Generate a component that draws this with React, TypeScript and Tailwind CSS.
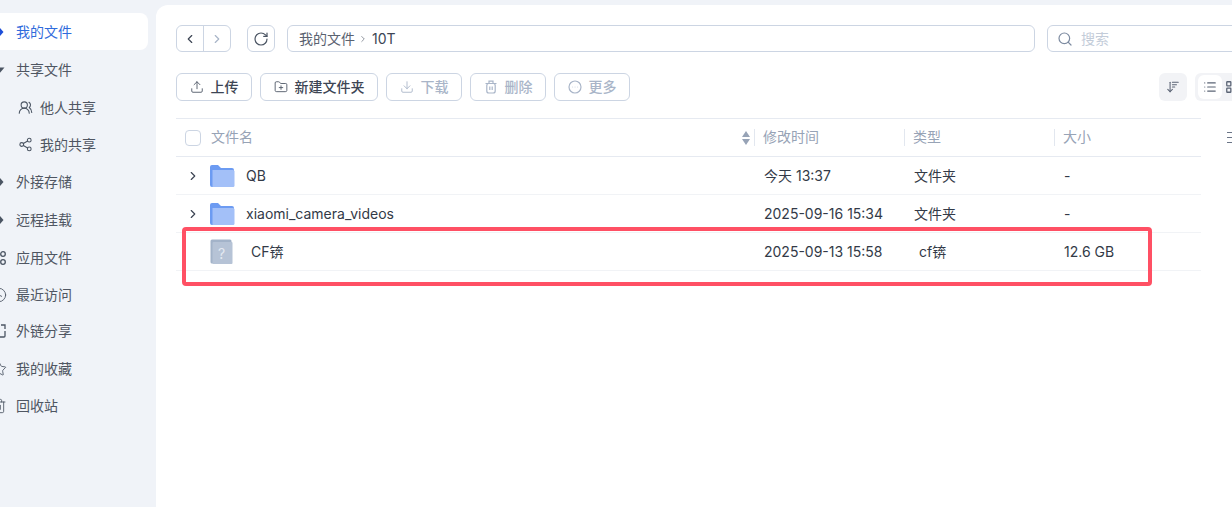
import { FC, ReactElement, ReactNode } from "react";
import {
  ArrowDownWideNarrow,
  ChevronLeft,
  ChevronRight,
  Clock,
  Download,
  FolderPlus,
  LayoutGrid,
  List,
  RotateCw,
  Search,
  Share2,
  Star,
  Trash2,
  Upload,
  UsersRound
} from "lucide-react";

const FONT = "font-['Inter','Noto_Sans_CJK_SC',sans-serif]";

const Diamond: FC<{ color: string }> = ({ color }): ReactElement => (
  <svg width="16" height="16" viewBox="0 0 16 16">
    <path d="M8 3 L12.5 8 L8 13 L3.5 8 Z" fill={color} />
  </svg>
);

const Caret: FC = (): ReactElement => (
  <svg width="16" height="16" viewBox="0 0 16 16">
    <path d="M3 5.5 H13.5 L8 12 Z" fill="#4b5563" />
  </svg>
);

const AppsIcon: FC = (): ReactElement => (
  <svg width="16" height="16" viewBox="0 0 16 16" fill="none" stroke="#4b5563" strokeWidth="1.3">
    <circle cx="4" cy="4" r="2.3" />
    <circle cx="12" cy="4" r="2.3" />
    <circle cx="12" cy="12" r="2.3" />
    <circle cx="4" cy="12" r="2.3" />
  </svg>
);

const LinkShareIcon: FC = (): ReactElement => (
  <svg width="16" height="16" viewBox="0 0 16 16" fill="none" stroke="#4b5563" strokeWidth="1.3">
    <path d="M8 3 H3 a1 1 0 0 0 -1 1 V13 a1 1 0 0 0 1 1 H13 a1 1 0 0 0 1 -1 V8" />
    <path d="M10 2 H14 V6" />
  </svg>
);

const MoreIcon: FC = (): ReactElement => (
  <svg width="14" height="14" viewBox="0 0 14 14" fill="none" stroke="#a9b5c8" strokeWidth="1.2">
    <circle cx="7" cy="7" r="6" />
    <path d="M4.5 7 H4.6 M7 7 H7.1 M9.5 7 H9.6" stroke="#d5dbe5" strokeLinecap="round" />
  </svg>
);

const BinIcon: FC = (): ReactElement => (
  <svg width="14" height="14" viewBox="0 0 14 14" fill="none" stroke="#a9b5c8" strokeWidth="1.2">
    <path d="M1.5 3.5 H12.5 M5 3.5 V1.2 H9 V3.5" />
    <rect x="2.8" y="3.5" width="8.4" height="9.5" rx="2" />
    <path d="M5.8 6.5 V10 M8.2 6.5 V10" />
  </svg>
);

interface NavItemProps {
  label: string;
  icon: ReactNode;
  active?: boolean;
  sub?: boolean;
  className?: string;
}

const NavItem: FC<NavItemProps> = ({ label, icon, active, sub, className }): ReactElement => (
  <div
    className={`flex h-[37px] items-center text-[14px] leading-none ${
      active ? "rounded-r-lg bg-white text-[#2f6bdc]" : "text-[#4f5662]"
    } ${sub ? "gap-[7px] pl-[17px]" : "gap-[9px]"} ${className ?? ""}`}
  >
    <span className={`flex w-[16px] shrink-0 items-center justify-center ${sub ? "" : "-ml-[9px]"}`}>{icon}</span>
    <span>{label}</span>
  </div>
);

const Sidebar: FC = (): ReactElement => (
  <aside className="flex w-[156px] shrink-0 flex-col overflow-hidden pt-[13px] pr-[8px]">
    <NavItem label="我的文件" active icon={<Diamond color="#1d4ed8" />} />
    <NavItem label="共享文件" icon={<Caret />} className="mt-[1px]" />
    <NavItem label="他人共享" sub icon={<UsersRound size={15} strokeWidth={1.7} color="#4b5563" />} className="mt-[1px]" />
    <NavItem label="我的共享" sub icon={<Share2 size={15} strokeWidth={1.7} color="#4b5563" />} />
    <NavItem label="外接存储" icon={<Diamond color="#4b5563" />} />
    <NavItem label="远程挂载" icon={<Diamond color="#4b5563" />} className="mt-[1px]" />
    <NavItem label="应用文件" icon={<AppsIcon />} className="mt-[1px]" />
    <NavItem label="最近访问" icon={<Clock size={16} strokeWidth={1.3} color="#4b5563" />} />
    <NavItem label="外链分享" icon={<LinkShareIcon />} className="-mt-[1px]" />
    <NavItem label="我的收藏" icon={<Star size={16} strokeWidth={1.3} color="#4b5563" />} className="mt-[1px]" />
    <NavItem label="回收站" icon={<Trash2 size={16} strokeWidth={1.3} color="#4b5563" />} />
  </aside>
);

interface ToolButtonProps {
  label: string;
  icon: ReactNode;
  width: string;
  disabled?: boolean;
}

const ToolButton: FC<ToolButtonProps> = ({ label, icon, width, disabled }): ReactElement => (
  <button
    className={`flex h-[28px] items-center justify-center gap-[7px] rounded-md border border-[#ccd5e3] text-[14px] font-medium ${width} ${
      disabled ? "text-[#a9b5c8]" : "text-[#3d4554]"
    }`}
  >
    {icon}
    <span className="pb-[2px]">{label}</span>
  </button>
);

const FolderIcon: FC = (): ReactElement => (
  <svg width="26" height="26" viewBox="0 0 26 26">
    <path d="M1 4 a2 2 0 0 1 2 -2 H9 l3 3 H23 a2 2 0 0 1 2 2 V22 a2 2 0 0 1 -2 2 H3 a2 2 0 0 1 -2 -2 Z" fill="#6c9bf2" />
    <path d="M3.5 7 H24 a1.5 1.5 0 0 1 1.5 1.5 V22.5 a1.5 1.5 0 0 1 -1.5 1.5 H3.5 Z" fill="#a3c0f8" />
  </svg>
);

const UnknownFileIcon: FC = (): ReactElement => (
  <svg width="24" height="26" viewBox="0 0 24 26">
    <rect x="0.5" y="0.5" width="21" height="24" rx="1.5" fill="#a3b3c9" />
    <rect x="2.5" y="3" width="20" height="22" rx="1" fill="#b6c3d6" />
    <text x="11.5" y="20" textAnchor="middle" fontSize="14" fill="#e4e9f1" fontFamily="Inter, sans-serif">
      ?
    </text>
  </svg>
);

const HeaderCell: FC<{ label: string; width: string }> = ({ label, width }): ReactElement => (
  <div className={`flex items-center ${width}`}>
    <span className="h-[17px] w-px bg-[#e2e7ef]" />
    <span className="ml-[8px] pb-[2px]">{label}</span>
  </div>
);

interface RowProps {
  name: string;
  time: string;
  type: string;
  size: string;
  folder?: boolean;
}

const Row: FC<RowProps> = ({ name, time, type, size, folder }): ReactElement => (
  <div className="flex h-[38px] items-center border-b border-[#f1f3f6] text-[14px] text-[#333a47]">
    <div className="flex w-[579px] items-center">
      {folder ? (
        <>
          <ChevronRight size={14} strokeWidth={2} color="#3d4554" className="ml-[10px]" />
          <span className="ml-[9px] flex"><FolderIcon /></span>
          <span className="ml-[11px]">{name}</span>
        </>
      ) : (
        <>
          <span className="ml-[34px] flex"><UnknownFileIcon /></span>
          <span className="ml-[17px]">{name}</span>
        </>
      )}
    </div>
    <div className="w-[150px] pl-[9px]">{time}</div>
    <div className={`w-[150px] ${folder ? "pl-[9px]" : "pl-[14px]"}`}>{type}</div>
    <div className="flex-1 pl-[9px]">{size}</div>
  </div>
);

const App: FC = (): ReactElement => (
  <div className={`flex h-[507px] w-[1232px] overflow-hidden bg-[#f0f3f8] ${FONT}`}>
    <Sidebar />
    <main className="relative mt-[5px] min-w-0 flex-1 overflow-hidden rounded-tl-xl bg-white pt-[20px] pl-[20px]">
      <div className="flex h-[27px] w-[1100px] items-center">
        <div className="flex h-[27px] w-[55px] items-center rounded-md border border-[#ccd5e3]">
          <span className="flex h-full w-[27px] items-center justify-center border-r border-[#ccd5e3]">
            <ChevronLeft size={14} strokeWidth={2} color="#3d4554" />
          </span>
          <span className="flex flex-1 items-center justify-center">
            <ChevronRight size={14} strokeWidth={2} color="#a9b5c8" />
          </span>
        </div>
        <span className="ml-[16px] flex h-[27px] w-[28px] items-center justify-center rounded-md border border-[#ccd5e3]">
          <RotateCw size={16} strokeWidth={1.8} color="#4b5563" />
        </span>
        <div className="ml-[12px] flex h-[27px] w-[748px] items-center rounded-md border border-[#ccd5e3] pl-[11px] text-[14px]">
          <span className="text-[#5a6270]">我的文件</span>
          <ChevronRight size={10} strokeWidth={1.6} color="#5a6270" className="mr-[4px] ml-[3px]" />
          <span className="text-[#3d4554]">10T</span>
        </div>
        <div className="ml-[12px] flex h-[27px] w-[200px] shrink-0 items-center rounded-l-md border border-[#ccd5e3] pl-[9px] text-[14px] text-[#c3ccd9]">
          <Search size={16} strokeWidth={1.8} color="#7d8ba1" />
          <span className="ml-[8px]">搜索</span>
        </div>
      </div>

      <div className="mt-[21px] flex h-[28px] w-[1100px] items-center">
        <div className="flex items-center gap-[8px]">
          <ToolButton label="上传" width="w-[76px]" icon={<Upload size={14} strokeWidth={1.5} color="#4b5563" />} />
          <ToolButton label="新建文件夹" width="w-[118px]" icon={<FolderPlus size={14} strokeWidth={1.5} color="#4b5563" />} />
          <ToolButton label="下载" width="w-[76px]" disabled icon={<Download size={14} strokeWidth={1.5} color="#a9b5c8" />} />
          <ToolButton label="删除" width="w-[76px]" disabled icon={<BinIcon />} />
          <ToolButton label="更多" width="w-[76px]" disabled icon={<MoreIcon />} />
        </div>
        <span className="ml-[529px] flex h-[28px] w-[28px] shrink-0 items-center justify-center rounded-md bg-[#f2f3f6]">
          <ArrowDownWideNarrow size={14} strokeWidth={1.8} color="#5b6475" />
        </span>
        <div className="ml-[8px] flex h-[28px] w-[60px] shrink-0 items-center rounded-md bg-[#f2f3f6] pl-[3px]">
          <span className="flex h-[24px] w-[24px] items-center justify-center rounded-md bg-white">
            <List size={14} strokeWidth={2} color="#5b6475" />
          </span>
          <LayoutGrid size={14} strokeWidth={2.2} color="#5b6475" className="ml-[3px]" />
        </div>
      </div>

      <div className="relative mt-[17px] w-[1025px]">
        <div className="flex h-[39px] items-center border-y border-[#e6eaf1] text-[14px] text-[#97a3b6]">
          <div className="flex w-[578px] items-center">
            <span className="ml-[9px] h-[16px] w-[16px] rounded-[4px] border border-[#ccd5e3]" />
            <span className="ml-[10px] pb-[2px]">文件名</span>
            <svg width="8" height="16" viewBox="0 0 8 16" className="mr-[4px] ml-auto">
              <path d="M4 1 L8 7 H0 Z" fill="#97a3b6" />
              <path d="M4 15 L8 9 H0 Z" fill="#97a3b6" />
            </svg>
          </div>
          <HeaderCell label="修改时间" width="w-[150px]" />
          <HeaderCell label="类型" width="w-[150px]" />
          <HeaderCell label="大小" width="flex-1" />
        </div>
        <Row folder name="QB" time="今天 13:37" type="文件夹" size="-" />
        <Row folder name="xiaomi_camera_videos" time="2025-09-16 15:34" type="文件夹" size="-" />
        <Row name="CF锛" time="2025-09-13 15:58" type="cf锛" size="12.6 GB" />
        <div className="absolute top-[109px] left-[6px] h-[59px] w-[970px] rounded-[4px] border-[4px] border-[#ff5064]" />
      </div>
      <span className="absolute top-[127px] left-[1071px] flex flex-col gap-[4px]">
        <span className="h-px w-[8px] bg-[#6b7587]" />
        <span className="h-px w-[8px] bg-[#6b7587]" />
        <span className="h-px w-[8px] bg-[#6b7587]" />
      </span>
    </main>
  </div>
);

export default App;
